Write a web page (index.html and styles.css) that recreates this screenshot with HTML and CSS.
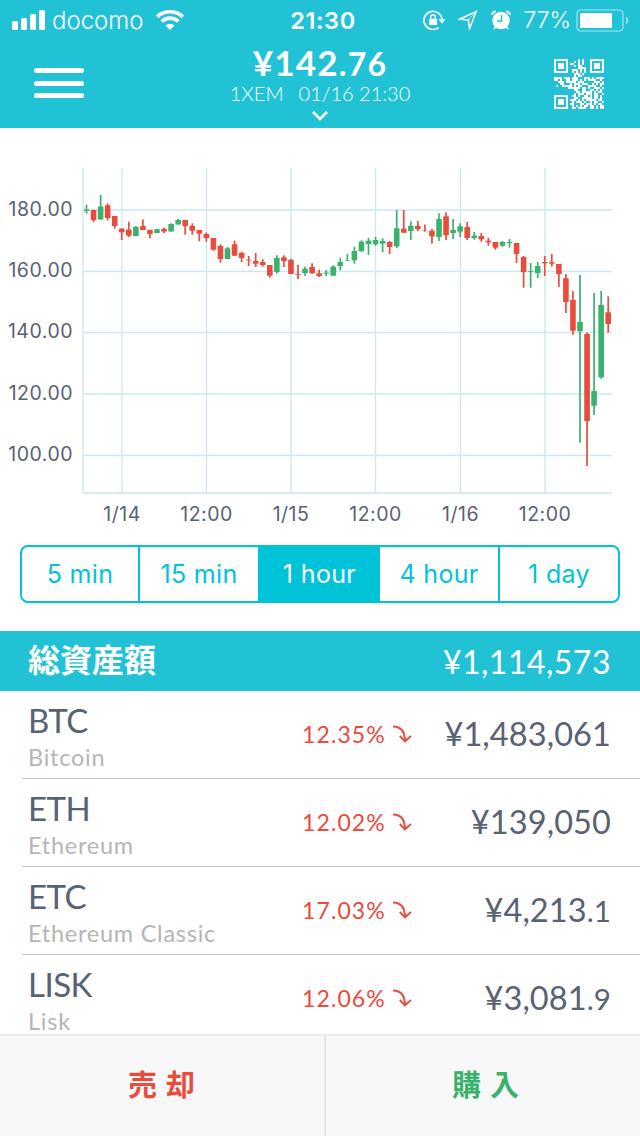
FILE: index.html
```html
<!DOCTYPE html>
<html lang="ja">
<head>
  <meta charset="UTF-8">
  <meta name="viewport" content="width=device-width,initial-scale=1.0">
  <title>XEM</title>
  <link rel="stylesheet" href="styles.css">
</head>
<body>

  <header class="top">
    <div class="statusbar">
      <div class="status-left">
        <svg class="signal" width="34" height="20" viewBox="0 0 34 20" fill="#fff">
          <rect x="0" y="11" width="6" height="9" rx="1.5"/>
          <rect x="9" y="8" width="6" height="12" rx="1.5"/>
          <rect x="18" y="4" width="6" height="16" rx="1.5"/>
          <rect x="27" y="0" width="6" height="20" rx="1.5"/>
        </svg>
        <span class="carrier">docomo</span>
        <svg class="wifi" width="28" height="20" viewBox="0 0 28 20">
          <path d="M1.2 6.8a18.5 18.5 0 0 1 25.6 0M5.7 11.5a11.8 11.8 0 0 1 16.6 0" fill="none" stroke="#fff" stroke-width="3.7"/>
          <path d="M14 20l-4.4-4.5a6.4 6.4 0 0 1 8.8 0z" fill="#fff"/>
        </svg>
      </div>
      <span class="clock">21:30</span>
      <div class="status-right">
        <svg class="lock" width="23" height="20" viewBox="0 0 23 20">
          <path d="M15.7 17.5A9.1 9.1 0 1 1 19.1 10" fill="none" stroke="#fff" stroke-width="1.7"/>
          <path d="M15.5 9.2h7L19 13.5z" fill="#fff"/>
          <rect x="6" y="8.7" width="8" height="6.3" rx=".6" fill="#fff"/>
          <path d="M7.7 9V7a2.3 2.3 0 0 1 4.6 0v2" fill="none" stroke="#fff" stroke-width="1.4"/>
        </svg>
        <svg class="location" width="20" height="20" viewBox="0 0 20 20">
          <path d="M1.5 9.2L18.3 1.5 11.5 18.5 10.3 10z" fill="none" stroke="#fff" stroke-width="1.5"/>
          <path d="M17.8 2L10.3 10" stroke="#fff" stroke-width=".7"/>
        </svg>
        <svg class="alarm" width="20" height="20" viewBox="0 0 20 20">
          <circle cx="10" cy="10.5" r="8.7" fill="#fff"/>
          <path d="M.8 4.8A5 5 0 0 1 4.8 1.2M15.2 1.2a5 5 0 0 1 4 3.6" fill="none" stroke="#fff" stroke-width="2"/>
          <path d="M4.500 16.500L3 19M15.5 16.5L17 19" stroke="#fff" stroke-width="1.6"/>
          <path d="M10.600 5v6H6" fill="none" stroke="#22c2d6" stroke-width="1.5"/>
        </svg>
        <span class="percent">77%</span>
        <svg class="battery" width="53" height="23" viewBox="0 0 53 23">
          <rect x="1" y="1" width="46" height="21" rx="4" fill="none" stroke="#fff" stroke-opacity=".4" stroke-width="1.7"/>
          <rect x="4" y="4" width="32" height="15" fill="#fff"/>
          <path d="M50 7.500a4.500 4.500 0 0 1 0 8z" fill="#fff" fill-opacity=".5"/>
        </svg>
      </div>
    </div>

    <div class="navbar">
      <div class="menu"><i></i><i></i><i></i></div>
      <div class="price">
        <div class="price-main">¥142<small>.76</small></div>
        <div class="price-sub"><span>1XEM</span><span>01/16 21:30</span></div>
        <svg class="chevron" width="18" height="11" viewBox="0 0 18 11"><path d="M2 2l7 7 7-7" fill="none" stroke="#fff" stroke-width="2.5"/></svg>
      </div>
      <svg class="qr" id="qr" width="50" height="50" viewBox="0 0 25 25" shape-rendering="crispEdges"></svg>
    </div>
  </header>

  <svg class="chart" id="chart" width="640" height="417" viewBox="0 128 640 417"></svg>

  <div class="tabs">
    <div class="tab">5 min</div>
    <div class="tab">15 min</div>
    <div class="tab active">1 hour</div>
    <div class="tab">4 hour</div>
    <div class="tab">1 day</div>
  </div>

  <div class="total">
    <h2>総資産額</h2>
    <span class="total-value">¥1,114,573</span>
  </div>

  <div class="list">
    <div class="coin">
      <div class="name"><b>BTC</b><span>Bitcoin</span></div>
      <div class="change">12.35%<svg class="arrow" viewBox="0 0 20 18"><path d="M1 1.5c7.5 0 12 5 12 15M7.8 11L13 16.5l6-5.5"/></svg></div>
      <div class="value">¥1,483,061</div>
    </div>
    <div class="coin">
      <div class="name"><b>ETH</b><span>Ethereum</span></div>
      <div class="change">12.02%<svg class="arrow" viewBox="0 0 20 18"><path d="M1 1.5c7.5 0 12 5 12 15M7.8 11L13 16.5l6-5.5"/></svg></div>
      <div class="value">¥139,050</div>
    </div>
    <div class="coin">
      <div class="name"><b>ETC</b><span>Ethereum Classic</span></div>
      <div class="change">17.03%<svg class="arrow" viewBox="0 0 20 18"><path d="M1 1.5c7.5 0 12 5 12 15M7.8 11L13 16.5l6-5.5"/></svg></div>
      <div class="value">¥4,213<small>.1</small></div>
    </div>
    <div class="coin">
      <div class="name"><b>LISK</b><span>Lisk</span></div>
      <div class="change">12.06%<svg class="arrow" viewBox="0 0 20 18"><path d="M1 1.5c7.5 0 12 5 12 15M7.8 11L13 16.5l6-5.5"/></svg></div>
      <div class="value">¥3,081<small>.9</small></div>
    </div>
  </div>

  <footer class="actions">
    <div class="action sell">売却</div>
    <div class="action buy">購入</div>
  </footer>

  <script src="chart.js"></script>
</body>
</html>
```
FILE: styles.css
```css
:root{
  --teal:#22c2d6;
  --cyan:#00c3d7;
  --ink:#596273;
  --red:#e94b3c;
  --green:#39b36b;
}
*{box-sizing:border-box;margin:0;padding:0}
body{
  width:640px;
  height:1136px;
  display:flex;
  flex-direction:column;
  background:#fff;
  color:var(--ink);
  font-family:Lato,"Noto Sans CJK JP",sans-serif;
  overflow:hidden;
}
svg{display:block;flex:none}
/* header */
.top{
  height:128px;
  flex:none;
  background:var(--teal);
  color:#fff;
}
.statusbar{
  height:40px;
  display:grid;
  grid-template-columns:1fr auto 1fr;
  align-items:center;
  padding:0 11px 0 12px;
  font-family:Inter,sans-serif;
}
.status-left,.status-right{display:flex;align-items:center}
.status-right{justify-content:flex-end}
.carrier{
  margin-left:6px;
  font-size:24px;
  font-weight:300;
}
.wifi{margin-left:12px}
.clock{
  padding-left:5px;
  font-size:23.5px;
  font-weight:600;
  letter-spacing:.6px;
}
.location{margin-left:12px}
.alarm{margin-left:13px}
.percent{
  margin-left:13px;
  font-size:23px;
  font-weight:300;
  letter-spacing:-.1px;
}
.battery{margin-left:5px}
.navbar{
  height:88px;
  display:grid;
  grid-template-columns:150px 1fr 150px;
  padding:0 36px 0 34px;
}
.menu{
  padding-top:28px;
  display:flex;
  flex-direction:column;
  gap:7.5px;
}
.menu i{
  width:50px;
  height:5px;
  border-radius:3px;
  background:#fff;
}
.price{
  display:flex;
  flex-direction:column;
  align-items:center;
  padding-left:2px;
}
.price-main{
  height:42px;
  line-height:44px;
  font-size:35px;
  font-weight:700;
  letter-spacing:1.2px;
  white-space:nowrap;
}
.price-main small{font-size:32px}
.price-sub{
  height:24px;
  line-height:23px;
  display:flex;
  gap:15px;
  font-size:20px;
  font-weight:300;
  white-space:nowrap;
}
.chevron{margin-top:4px}
.qr{justify-self:end;margin-top:19px}
/* candle chart */
.chart{
  font-family:Inter,sans-serif;
  font-size:19.5px;
  letter-spacing:.5px;
}
.chart text{fill:var(--ink)}
.grid{stroke:#c9e9ee;stroke-width:1.3}
.up{fill:var(--green)}
.down{fill:var(--red)}
/* period tabs */
.tabs{
  height:58px;
  flex:none;
  margin:0 20px;
  display:grid;
  grid-template-columns:116px 120px 121px 119px 120px;
  border:2px solid var(--cyan);
  border-radius:8px;
  overflow:hidden;
}
.tab{
  line-height:54px;
  text-align:center;
  font-family:Inter,sans-serif;
  font-size:25px;
  letter-spacing:.35px;
  color:var(--cyan);
}
.tab + .tab{border-left:2px solid var(--cyan)}
.tab.active{background:var(--cyan);color:#fff}
.tab.active + .tab{border-left-width:1px}
/* total */
.total{
  height:60px;
  flex:none;
  margin-top:28px;
  padding:0 29px 0 28px;
  display:flex;
  align-items:center;
  justify-content:space-between;
  background:var(--teal);
  color:#fff;
}
.total h2{
  font-size:32px;
  font-weight:700;
  line-height:56px;
  padding-bottom:2px;
}
.total-value{
  font-size:32px;
  letter-spacing:.5px;
}
/* coins */
.list{
  height:343px;
  flex:none;
  padding-left:22px;
  overflow:hidden;
}
.coin{
  height:88px;
  padding:0 29px 0 6px;
  display:grid;
  grid-template-columns:274px 112px 1fr;
  border-bottom:1px solid #c8c8c8;
}
.name b{
  display:block;
  height:53px;
  line-height:58px;
  font-size:33px;
  font-weight:400;
  letter-spacing:-.5px;
}
.name span{
  display:block;
  line-height:26px;
  font-size:23.5px;
  letter-spacing:.75px;
  color:#b5b5b5;
  white-space:nowrap;
}
.change{
  height:85px;
  display:flex;
  align-items:center;
  font-size:23px;
  letter-spacing:1.1px;
  color:var(--red);
  white-space:nowrap;
}
.arrow{
  width:20px;
  height:18px;
  margin-left:6px;
  fill:none;
  stroke:var(--red);
  stroke-width:1.9;
}
.value{
  text-align:right;
  line-height:86px;
  font-size:32.5px;
  letter-spacing:.1px;
}
.value small{font-size:29.5px}
/* bottom buttons */
.actions{
  height:102px;
  flex:none;
  display:flex;
  background:#f8f8f8;
  border-top:2px solid #ebeded;
}
.action{
  width:324px;
  line-height:98px;
  padding-left:8px;
  text-align:center;
  font-size:29px;
  font-weight:700;
  letter-spacing:9px;
}
.sell{color:var(--red)}
.buy{
  width:316px;
  padding-left:14px;
  color:var(--green);
  border-left:2px solid #e2e6ea;
}
```
FILE: chart.js
```js
// direction, high, body top, body bottom, low
const candles = [
  ['u',204.7,209.5,210.9,213.7],['d',209.5,210,220,222.3],['u',194.8,206.5,219.5,219.5],['d',203.3,205.3,218,220.5],
  ['d',216,216,226,228.7],['d',228.5,228.5,232.3,240],['d',221.7,229.5,235.7,237],['u',226,227,236,236],
  ['d',219.5,226,230,230],['d',229.5,230,234,238.3],['u',229,229.3,233,233],['d',227.5,229,231.5,233],
  ['u',223.3,224,231.5,231.5],['u',219,220,224.5,224.5],['d',220,220,226,234.7],['d',223.3,226,230.7,234.7],
  ['d',230,230,233.7,241.3],['d',232.5,234,238,241.7],['d',238,238,249.7,250.7],['d',244.3,246,259,262.7],
  ['u',247,248.3,259,259],['d',240.7,244.3,255.7,256],['d',251.7,253,258,262],['d',256,259.7,260.4,266],
  ['d',253,261,263.7,267],['d',259.3,262,265,266.7],['d',265,265,275.7,277.7],['u',255.3,258,272,273.7],
  ['d',255.3,257.3,261,267],['d',258.7,260,274,274],['d',264.7,274,274.7,279],['u',266.7,268.7,273,276],
  ['d',263.3,267,273,274],['d',269.7,273.3,276,277],['u',270,272.7,273.7,276],['u',265.3,266.7,275.7,275.7],
  ['u',257.7,262,266,270.3],['u',254,260.3,260.8,261],['u',246.7,251,260.3,263.7],['u',240.3,241.7,251,252],
  ['u',238,240.7,244,255],['u',237,240,244.3,245.7],['u',238.3,241,243.7,252.3],['d',241,242,247,254],
  ['u',210,228.3,246.3,248],['d',210,228.7,232.7,232.7],['u',221.3,226,231,240],['d',221,226,229,231],
  ['d',224.5,230.2,230.6,231.7],['d',229,230.7,236.3,243.7],['u',213.3,219,237,241],['d',212.3,216.3,235.3,240],
  ['u',219,230,233,239],['u',223.3,226.3,231.7,237],['d',222,227,238,240],['u',232,235.7,238,239.7],
  ['d',233,236,239.3,241.7],['d',237.7,240.7,242.3,245.7],['d',242,242,247.7,249.7],['u',241,242,245.7,247],
  ['u',239,242,243,247.7],['d',243,243,254,263],['d',256,257,272,287.7],['u',263,271,271.8,287.7],
  ['u',262,266,273,278],['d',256,262,263.3,276],['d',254,262.3,263.7,266.7],['d',264,264,274,287],
  ['d',274,278.3,302,313],['d',291,300,330.7,334.7],['u',275,322,331,442.7],['d',332.3,334,421,466],
  ['u',293,391,405.7,415],['u',291,305,377.3,378.7],['d',296.3,312.3,324,332.7]
];
const rows = [['180.00',210],['160.00',271.5],['140.00',332.5],['120.00',394],['100.00',455.5]];
const cols = [['1/14',122],['12:00',206.5],['1/15',291],['12:00',375.5],['1/16',460.5],['12:00',545]];

let out = '<path class="grid" fill="none" d="M83 168V493H612"/>';
rows.forEach(([t,y]) => {
  out += `<path class="grid" d="M83 ${y}H612"/><text x="73" y="${y+5.5}" text-anchor="end">${t}</text>`;
});
cols.forEach(([t,x]) => {
  out += `<path class="grid" d="M${x} 168V493"/><text x="${x}" y="521" text-anchor="middle">${t}</text>`;
});
candles.forEach(([c,h,a,b,l],i) => {
  const x = 86.5 + i*7.05;
  const cls = c==='u' ? 'up' : 'down';
  out += `<rect class="${cls}" x="${x-.85}" y="${h}" width="1.7" height="${l-h}"/>`;
  out += `<rect class="${cls}" x="${x-2.8}" y="${a}" width="5.6" height="${b-a}"/>`;
});
document.getElementById('chart').innerHTML = out;

// QR modules, 25 x 25
const qr = [
  '#######.....#.#...#######',
  '#.....#...#.#.#...#.....#',
  '#.###.#.##..#.#...#.###.#',
  '#.###.#...#.##....#.###.#',
  '#.###.#.....####..#.###.#',
  '#.....#..###.#.#..#.....#',
  '#######..#.#.#.#..#######',
  '..........###.#..........',
  '..........#.##...........',
  '####.###.###...###.#.####',
  '##.#..##.###.#.#.####..#.',
  '..###.#####.###.....###.#',
  '...##...#.###.###..#.#.##',
  '.#..#####.#.##...####..#.',
  '.......######.##.#..###.#',
  '..........##..##..##.#.#.',
  '...........##.#####.#.##.',
  '..........#.###.###.##..#',
  '#######..##.#..##.#.##.#.',
  '#.....#...##..#####.##.#.',
  '#.###.#.###.#.#.#####.##.',
  '#.###.#..#.###.#..#.##..#',
  '#.###.#.##...##.###.#.##.',
  '#.....#..#.#.#.##.##.#.##',
  '#######..##.####..##.#.##'
];
let mods = '';
qr.forEach((r,y) => [...r].forEach((m,x) => {
  if (m === '#') mods += `M${x} ${y}h1v1h-1z`;
}));
document.getElementById('qr').innerHTML = `<path fill="#fff" d="${mods}"/>`;
```
